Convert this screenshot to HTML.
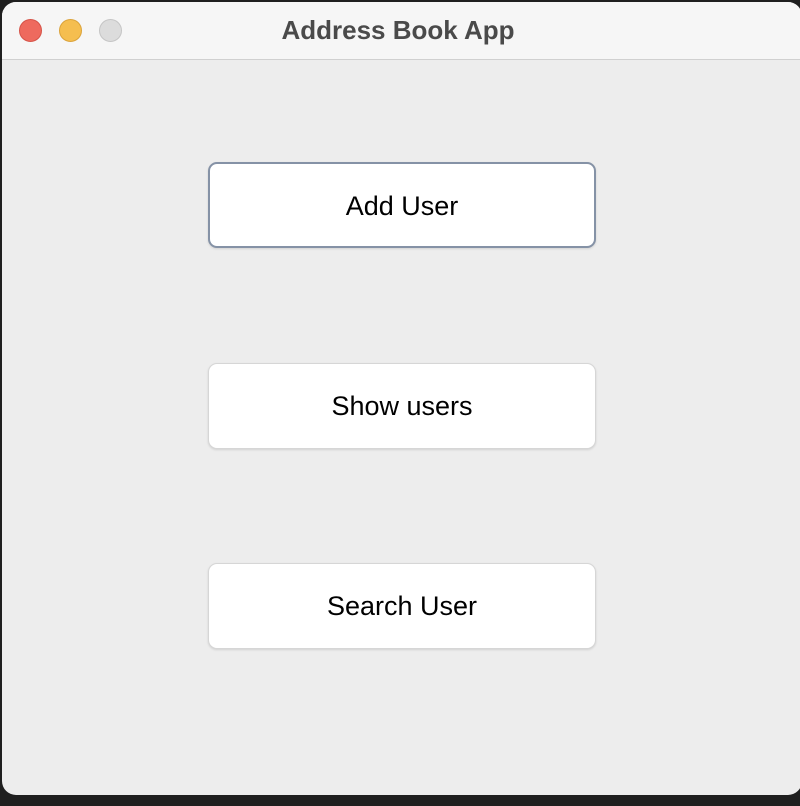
<!DOCTYPE html>
<html><head><style>
html,body{margin:0;padding:0;width:800px;height:806px;background:#1f1f1f;overflow:hidden;font-family:"Liberation Sans",sans-serif;}
.win{position:absolute;left:2px;top:2px;width:800px;height:793px;background:#ededed;border-radius:14px;overflow:hidden;}
.tb{position:absolute;left:0;top:0;right:0;height:57px;background:#f6f6f6;border-bottom:1px solid #d0d0d0;}
.tb .t{position:absolute;left:-4px;width:800px;top:13px;text-align:center;font-weight:bold;font-size:26px;color:#4a4a4a;}
.d{position:absolute;top:17px;width:23px;height:23px;border-radius:50%;box-sizing:border-box;}
.btn{position:absolute;left:206px;width:388px;height:86px;background:#fff;border-radius:9px;box-sizing:border-box;border:1px solid #d6d6d6;box-shadow:0 1px 2px rgba(0,0,0,.12);text-align:center;line-height:84px;font-size:27px;color:#000;}
</style></head><body>
<div class="win">
<div class="tb">
<div class="d" style="left:17px;background:#ee6a5e;border:1px solid #d65348"></div>
<div class="d" style="left:57px;background:#f5be4f;border:1px solid #dba33a"></div>
<div class="d" style="left:97px;background:#dcdcdc;border:1px solid #c5c5c5"></div>
<div class="t">Address Book App</div>
</div>
<div class="btn" style="top:160px;border:2px solid #8592a6;line-height:84px">Add User</div>
<div class="btn" style="top:361px">Show users</div>
<div class="btn" style="top:561px">Search User</div>
</div>
</body></html>
